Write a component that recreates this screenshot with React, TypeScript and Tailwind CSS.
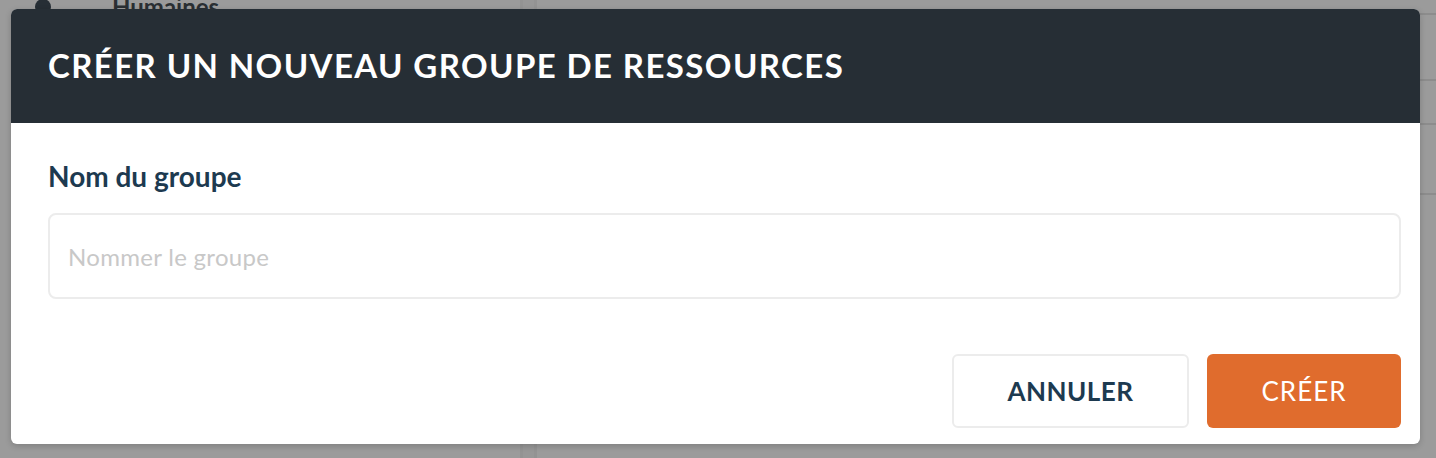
import { useState, ChangeEvent } from 'react';

function App() {
  const [nom, setNom] = useState('');

  const handleChange = (e: ChangeEvent<HTMLInputElement>) => {
    setNom(e.target.value);
  };

  return (
    <div className="relative h-[458px] w-[1436px] overflow-hidden bg-[#9b9b9b] font-['Lato','Open_Sans',sans-serif]">
      {/* page behind the overlay */}
      <div className="flex h-full">
        <div className="w-[520px] bg-[#9b9b9b]">
          <div className="-mt-[11px] flex items-center pl-[35px]">
            <span className="h-[16px] w-[16px] rounded-full bg-[#262e35]" />
            <span className="ml-[61px] text-[24px] font-bold text-[#2a2f33]">Humaines</span>
          </div>
        </div>
        <div className="w-[17px] border-x-[3px] border-x-[#939393] bg-[#979797]" />
        <div className="flex-1 bg-[#9b9b9b]">
          <div className="h-[15px] border-b-2 border-[#8c8c8c]" />
          <div className="h-[66px] border-b-2 border-[#8c8c8c]" />
          <div className="h-[44px] border-b-2 border-[#8c8c8c]" />
          <div className="h-[70px] border-b-2 border-[#8c8c8c]" />
        </div>
      </div>

      {/* modal */}
      <div className="absolute left-[11px] top-[9px] flex h-[435px] w-[1409px] flex-col overflow-hidden rounded-[6px] bg-white shadow-[0_2px_6px_rgba(0,0,0,0.18)]">
        <div className="flex h-[114px] shrink-0 items-center bg-[#262e35] px-[37px]">
          <h2 className="text-[33px] font-bold tracking-[1.4px] text-white">CRÉER UN NOUVEAU GROUPE DE RESSOURCES</h2>
        </div>

        <div className="flex flex-1 flex-col pl-[37px] pr-[19px] pt-[37px]">
          <label htmlFor="nom" className="text-[28px] font-bold leading-[32px] text-[#1d3a50]">
            Nom du groupe
          </label>
          <input
            id="nom"
            type="text"
            value={nom}
            onChange={handleChange}
            placeholder="Nommer le groupe"
            className="mt-[21px] h-[86px] w-full rounded-[8px] border-2 border-[#ececec] px-[18px] text-[24px] tracking-[0.3px] text-[#1d3a50] outline-none placeholder:text-[#c8c8c8]"
          />

          <div className="mt-[55px] flex justify-end gap-[18px]">
            <button className="h-[74px] w-[237px] rounded-[6px] border-2 border-[#ececec] bg-white text-[26px] font-bold tracking-[0.5px] text-[#1d3a50]">
              ANNULER
            </button>
            <button className="h-[74px] w-[194px] rounded-[6px] bg-[#e06c2d] text-[26px] tracking-[1px] text-white">
              CRÉER
            </button>
          </div>
        </div>
      </div>
    </div>
  );
}

export default App;
